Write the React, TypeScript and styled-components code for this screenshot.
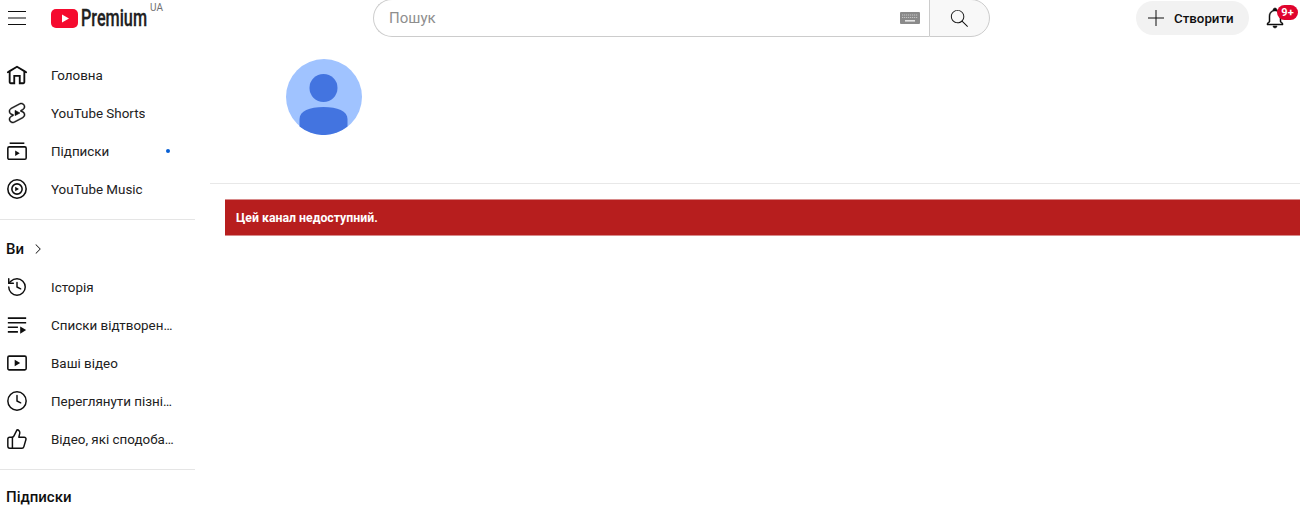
import React from 'react';
import styled, { createGlobalStyle } from 'styled-components';
import { ThumbsUp, History, Clock } from 'lucide-react';

const GlobalStyle = createGlobalStyle`
  html, body {
    margin: 0;
    padding: 0;
    height: 507px;
    overflow: hidden;
    background: #fff;
    font-family: Roboto, "Liberation Sans", sans-serif;
    color: #0f0f0f;
  }
`;

const Page = styled.div`
  width: 1300px;
  height: 507px;
  overflow: hidden;
  display: flex;
  flex-direction: column;
`;

/* HEADER */
const Header = styled.header`
  height: 56px;
  flex: none;
  display: flex;
  align-items: flex-start;
`;

const HeaderStart = styled.div`
  width: 373px;
  flex: none;
  display: flex;
  align-items: flex-start;
  padding: 6px 0 0 5px;
  box-sizing: border-box;
`;

const IconSlot = styled.span<{ $w?: number }>`
  width: ${(p) => p.$w ?? 24}px;
  height: 24px;
  flex: none;
  display: flex;
  align-items: center;
  justify-content: center;
`;

const LogoLink = styled.div`
  margin-left: 22px;
  display: flex;
  align-items: flex-start;
`;

const LogoWord = styled.span`
  font-size: 23px;
  font-weight: 500;
  line-height: 25px;
  margin-left: 3px;
  width: 66px;
  display: inline-block;
  transform: scaleX(0.705);
  transform-origin: left center;
  white-space: nowrap;
  color: #212121;
  -webkit-text-stroke: 0.3px #212121;
`;

const Country = styled.span`
  font-size: 10px;
  line-height: 12px;
  color: #717171;
  margin-left: 3px;
  margin-top: -4px;
`;

const SearchBox = styled.div`
  width: 617px;
  height: 38px;
  margin-top: -1px;
  flex: none;
  display: flex;
`;

const SearchInput = styled.div`
  flex: 1;
  box-sizing: border-box;
  border: 1px solid #ccc;
  border-right: none;
  border-radius: 19px 0 0 19px;
  display: flex;
  align-items: center;
  justify-content: space-between;
  padding: 0 9px 0 15px;
  font-size: 15px;
  color: #8e8e8e;
`;

const SearchButton = styled.div`
  width: 61px;
  box-sizing: border-box;
  border: 1px solid #ccc;
  border-radius: 0 19px 19px 0;
  background: #f8f8f8;
  display: flex;
  align-items: center;
  justify-content: center;
  padding-right: 1px;
`;

const HeaderEnd = styled.div`
  margin-left: auto;
  display: flex;
  align-items: flex-start;
  padding-top: 1px;
`;

const CreateButton = styled.div`
  width: 113px;
  height: 34px;
  box-sizing: border-box;
  border-radius: 17px;
  background: #f2f2f2;
  display: flex;
  align-items: center;
  padding-left: 8px;
  gap: 6px;
  font-size: 13.3px;
  font-weight: 500;
`;

const BellWrap = styled.div`
  position: relative;
  width: 24px;
  height: 24px;
  margin: 5px 13px 0 14px;
`;

const Badge = styled.span`
  position: absolute;
  left: 14px;
  top: -1px;
  width: 21px;
  height: 15px;
  border-radius: 8px;
  background: #e0042d;
  color: #fff;
  font-size: 11px;
  font-weight: 700;
  line-height: 15px;
  text-align: center;
`;

/* BODY */
const Body = styled.div`
  flex: 1;
  display: flex;
  min-height: 0;
`;

const Sidebar = styled.nav`
  width: 210px;
  flex: none;
`;

const Section = styled.div``;

const Divider = styled.div<{ $top: number; $bottom: number }>`
  width: 195px;
  height: 1px;
  background: #e5e5e5;
  margin: ${(p) => p.$top}px 0 ${(p) => p.$bottom}px;
`;

const NavItem = styled.div`
  width: 195px;
  height: 38px;
  box-sizing: border-box;
  display: flex;
  align-items: center;
  padding-left: 5px;
  gap: 22px;
  font-size: 13.4px;
  color: #212121;
`;

const NavLabel = styled.span`
  max-width: 124px;
  overflow: hidden;
  white-space: nowrap;
  text-overflow: ellipsis;
`;

const UnreadDot = styled.span`
  width: 4px;
  height: 4px;
  border-radius: 50%;
  background: #065fd4;
  margin-left: auto;
  margin-right: 25px;
`;

const SectionTitle = styled.div`
  height: 38px;
  display: flex;
  align-items: center;
  gap: 5px;
  padding-left: 6px;
  font-size: 15px;
  font-weight: 500;
`;

const Main = styled.main`
  flex: 1;
  display: flex;
  flex-direction: column;
  padding-top: 3px;
`;

const ChannelHead = styled.div`
  height: 125px;
  box-sizing: border-box;
  padding-left: 76px;
  border-bottom: 1px solid #e8e8e8;
`;

const Alert = styled.div`
  margin: 15px 0 0 15px;
  height: 37px;
  box-sizing: border-box;
  background: #b71e1e;
  border-top: 1px solid #d88a8a;
  border-bottom: 1px solid #d88a8a;
  display: flex;
  align-items: center;
  padding-left: 11px;
  color: #fff;
  font-size: 12.3px;
  font-weight: 700;
`;

const Svg = ({ d, size = 22, bold }: { d: string; size?: number; bold?: boolean }) => (
  <svg
    width={size}
    height={size}
    viewBox="0 0 24 24"
    fill="#0f0f0f"
    stroke={bold ? '#0f0f0f' : 'none'}
    strokeWidth={bold ? 0.5 : 0}
  >
    <path d={d} />
  </svg>
);

const paths = {
  menu: 'M21 6H3V5h18v1zm0 5.5H3v1h18v-1zm0 6.5H3v1h18v-1z',
  home: 'm11.485 2.143-8 4.8-2 1.2a1 1 0 001.03 1.714L3 9.567V20a2 2 0 002 2h5v-8h4v8h5a2 2 0 002-2V9.567l.485.29a1 1 0 001.03-1.714l-2-1.2-8-4.8a1 1 0 00-1.03 0ZM5 8.366l7-4.2 7 4.2V20h-3v-8H8v8H5V8.366Z',
  shorts:
    'M10 14.65v-5.3L15 12l-5 2.65zm7.77-4.33c-.77-.32-1.2-.5-1.2-.5L18 9.06c1.84-.96 2.53-3.23 1.56-5.06s-3.24-2.53-5.07-1.56L6 6.94c-1.29.68-2.07 2.04-2 3.49.07 1.42.93 2.67 2.22 3.25.03.01 1.2.5 1.2.5L6 14.93c-1.83.97-2.53 3.24-1.56 5.07.97 1.83 3.24 2.53 5.07 1.56l8.5-4.5c1.29-.68 2.06-2.04 1.99-3.49-.07-1.42-.94-2.68-2.23-3.25zm-.23 5.86-8.5 4.5c-1.34.71-3.01.2-3.72-1.14-.71-1.34-.2-3.01 1.14-3.72l2.04-1.08v-1.21l-.69-.28-1.11-.46c-.99-.41-1.65-1.35-1.7-2.41-.05-1.06.52-2.06 1.46-2.56l8.5-4.5c1.34-.71 3.01-.2 3.72 1.14.71 1.34.2 3.01-1.14 3.72L15.5 9.26v1.21l1.8.74c.99.41 1.65 1.35 1.7 2.41.05 1.06-.52 2.06-1.46 2.56z',
  search:
    'm20.87 20.17-5.59-5.59C16.35 13.35 17 11.75 17 10c0-3.87-3.13-7-7-7s-7 3.13-7 7 3.13 7 7 7c1.75 0 3.35-.65 4.58-1.71l5.59 5.59.7-.71zM10 16c-3.31 0-6-2.69-6-6s2.69-6 6-6 6 2.69 6 6-2.69 6-6 6z',
  plus: 'M20 12.5h-7.5V20h-1v-7.500H4v-1h7.500V4h1v7.500H20v1z',
  bell: 'M10 20h4c0 1.1-.9 2-2 2s-2-.9-2-2zm10-2.65V19H4v-1.65l2-1.88v-5.15C6 7.4 7.56 5.1 10 4.34v-.38c0-1.42 1.49-2.5 2.99-1.76.65.32 1.01 1.03 1.01 1.76v.39c2.44.75 4 3.06 4 5.98v5.15l2 1.87zm-1 .42-2-1.88v-5.47c0-2.47-1.19-4.36-3.13-5.1-1.26-.53-2.64-.5-3.84.03C8.15 6.11 7 7.99 7 10.42v5.47l-2 1.88V18h14v-.23z',
  chevron: 'm9.4 18.4-.7-.7 5.6-5.6-5.7-5.7.7-.7 6.4 6.4-6.3 6.3z',
};

const SubsIcon = () => (
  <svg width="22" height="22" viewBox="0 0 24 24" fill="none" stroke="#0f0f0f" strokeWidth="1.7">
    <path d="M4 3.5h16" />
    <rect x="2" y="7.5" width="20" height="13.5" rx="1.5" />
    <path d="M10 11.5v6l5-3z" fill="#0f0f0f" stroke="none" />
  </svg>
);

const MusicIcon = () => (
  <svg width="22" height="22" viewBox="0 0 24 24" fill="none" stroke="#0f0f0f" strokeWidth="1.7">
    <circle cx="12" cy="12" r="10" />
    <circle cx="12" cy="12" r="5.6" />
    <path d="M10 9.5v5l4.2-2.5z" fill="#0f0f0f" stroke="none" />
  </svg>
);

const PlaylistIcon = () => (
  <svg width="22" height="22" viewBox="0 0 24 24" fill="none" stroke="#0f0f0f" strokeWidth="1.7">
    <path d="M2 4.500h20M2 9.500h20M2 14.500h11M2 19.500h11" />
    <path d="M15.500 13.500v8l6.500-4z" fill="#0f0f0f" stroke="none" />
  </svg>
);

const VideosIcon = () => (
  <svg width="22" height="22" viewBox="0 0 24 24" fill="none" stroke="#0f0f0f" strokeWidth="1.7">
    <rect x="2" y="4.500" width="20" height="15" rx="1.500" />
    <path d="M9.500 8.500v7l6-3.500z" fill="#0f0f0f" stroke="none" />
  </svg>
);

const KeyboardIcon = () => (
  <svg width="20" height="12" viewBox="0 0 20 12">
    <rect width="20" height="12" rx="1" fill="#8a8a8a" />
    <path d="M2 3h16M2 5.500h16" stroke="#c4c4c4" strokeWidth="1" strokeDasharray="1.2 .8" />
    <rect x="5" y="8" width="10" height="1.600" fill="#e4e4e4" />
  </svg>
);

const LogoMark = () => (
  <svg width="27" height="19" viewBox="0 0 27 19" style={{ marginTop: 3 }}>
    <rect width="27" height="19" rx="5" fill="#f50b2f" />
    <path d="M11 5.500v8l7-4z" fill="#fff" />
  </svg>
);

const Avatar = () => (
  <svg width="76" height="76" viewBox="0 0 76 76" style={{ display: 'block' }}>
    <circle cx="38" cy="38" r="38" fill="#a0c3ff" />
    <circle cx="37.500" cy="29" r="14" fill="#4374e0" />
    <path d="M13.500 67.500V60c0-8 10-12 24-12s24 4 24 12v7.500a38 38 0 01-48 0z" fill="#4374e0" />
  </svg>
);

const lucideProps = { size: 22, strokeWidth: 1.6, color: '#0f0f0f' };

export default function App() {
  return (
    <Page>
      <GlobalStyle />
      <Header>
        <HeaderStart>
          <IconSlot>
            <Svg d={paths.menu} size={24} />
          </IconSlot>
          <LogoLink>
            <LogoMark />
            <LogoWord>Premium</LogoWord>
            <Country>UA</Country>
          </LogoLink>
        </HeaderStart>
        <SearchBox>
          <SearchInput>
            Пошук
            <KeyboardIcon />
          </SearchInput>
          <SearchButton>
            <Svg d={paths.search} size={23} />
          </SearchButton>
        </SearchBox>
        <HeaderEnd>
          <CreateButton>
            <Svg d={paths.plus} size={24} />
            Створити
          </CreateButton>
          <BellWrap>
            <Svg d={paths.bell} size={24} bold />
            <Badge>9+</Badge>
          </BellWrap>
        </HeaderEnd>
      </Header>
      <Body>
        <Sidebar>
          <Section>
            <NavItem>
              <IconSlot><Svg d={paths.home} /></IconSlot>
              <NavLabel>Головна</NavLabel>
            </NavItem>
            <NavItem>
              <IconSlot><Svg d={paths.shorts} size={26} bold /></IconSlot>
              <NavLabel>YouTube Shorts</NavLabel>
            </NavItem>
            <NavItem>
              <IconSlot><SubsIcon /></IconSlot>
              <NavLabel>Підписки</NavLabel>
              <UnreadDot />
            </NavItem>
            <NavItem>
              <IconSlot><MusicIcon /></IconSlot>
              <NavLabel>YouTube Music</NavLabel>
            </NavItem>
          </Section>
          <Divider $top={11} $bottom={10} />
          <Section>
            <SectionTitle>
              Ви
              <Svg d={paths.chevron} size={18} />
            </SectionTitle>
            <NavItem>
              <IconSlot><History {...lucideProps} /></IconSlot>
              <NavLabel>Історія</NavLabel>
            </NavItem>
            <NavItem>
              <IconSlot><PlaylistIcon /></IconSlot>
              <NavLabel>Списки відтворення</NavLabel>
            </NavItem>
            <NavItem>
              <IconSlot><VideosIcon /></IconSlot>
              <NavLabel>Ваші відео</NavLabel>
            </NavItem>
            <NavItem>
              <IconSlot><Clock {...lucideProps} /></IconSlot>
              <NavLabel>Переглянути пізніше</NavLabel>
            </NavItem>
            <NavItem>
              <IconSlot><ThumbsUp {...lucideProps} /></IconSlot>
              <NavLabel>Відео, які сподобалися</NavLabel>
            </NavItem>
          </Section>
          <Divider $top={11} $bottom={8} />
          <SectionTitle>Підписки</SectionTitle>
        </Sidebar>
        <Main>
          <ChannelHead>
            <Avatar />
          </ChannelHead>
          <Alert>Цей канал недоступний.</Alert>
        </Main>
      </Body>
    </Page>
  );
}
